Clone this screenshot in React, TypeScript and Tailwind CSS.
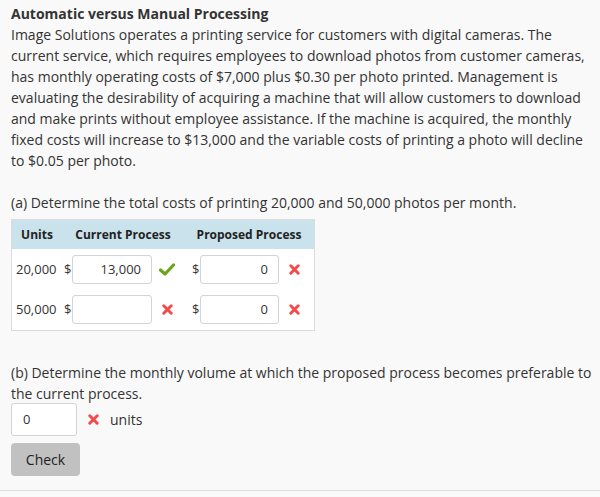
import React from 'react';

const font = { fontFamily: '"Open Sans", "Liberation Sans", sans-serif' };

const CheckIcon = () => (
  <svg width="16" height="13" viewBox="0 0 16 13" className="shrink-0">
    <path d="M1.5 7 L6 11 L14.5 2" fill="none" stroke="#6aa51c" strokeWidth="3.2" strokeLinecap="round" strokeLinejoin="round" />
  </svg>
);

const CrossIcon = () => (
  <svg width="11" height="11" viewBox="0 0 11 11" className="shrink-0">
    <path d="M1.8 1.8 L9.2 9.2 M9.2 1.8 L1.8 9.2" fill="none" stroke="#f24b4b" strokeWidth="3" strokeLinecap="round" />
  </svg>
);

const Field = ({ value, className = '' }: { value: string; className?: string }) => (
  <div
    className={`h-[29px] bg-white border border-[#d4d4d4] rounded-[3px] flex items-center justify-end pr-[10px] text-[13px] text-[#333] ${className}`}
  >
    {value}
  </div>
);

type Row = { units: string; current: string; currentOk: boolean; proposed: string; proposedOk: boolean };

const rows: Row[] = [
  { units: '20,000', current: '13,000', currentOk: true, proposed: '0', proposedOk: false },
  { units: '50,000', current: '', currentOk: false, proposed: '0', proposedOk: false },
];

export default function App() {
  return (
    <div style={font} className="w-[600px] h-[497px] bg-[#f9f9f9] text-[#333] overflow-hidden">
      <div className="border-b border-[#dcdcdc] h-[491px] pl-[11px] pr-[6px] pt-[3px]">
        <h1 className="text-[14px] leading-[21px] font-bold">Automatic versus Manual Processing</h1>
        <p className="text-[14px] leading-[21px]">
          Image Solutions operates a printing service for customers with digital cameras. The current service, which
          requires employees to download photos from customer cameras, has monthly operating costs of $7,000 plus $0.30
          per photo printed. Management is evaluating the desirability of acquiring a machine that will allow customers to
          download and make prints without employee assistance. If the machine is acquired, the monthly fixed costs will
          increase to $13,000 and the variable costs of printing a photo will decline to $0.05 per photo.
        </p>

        <p className="text-[14px] leading-[21px] mt-[21px]">
          (a) Determine the total costs of printing 20,000 and 50,000 photos per month.
        </p>

        {/* Cost table */}
        <div className="mt-[6px] w-[304px] border border-[#dcdcdc] bg-white">
          <div className="h-[29px] bg-[#c9e2ec] flex items-center text-[12px] font-bold text-[#222]">
            <div className="w-[50px] text-center">Units</div>
            <div className="w-[122px] text-center">Current Process</div>
            <div className="flex-1 text-center">Proposed Process</div>
          </div>
          <div className="flex flex-col gap-[11px] py-[6px]">
            {rows.map((row) => (
              <div key={row.units} className="flex items-center text-[13px]">
                <div className="w-[52px] pl-[4px]">{row.units}</div>
                <div className="w-[8px]">$</div>
                <Field value={row.current} className="w-[80px]" />
                <div className="w-[30px] flex justify-center">
                  {row.currentOk ? <CheckIcon /> : <CrossIcon />}
                </div>
                <div className="w-[18px] pl-[10px]">$</div>
                <Field value={row.proposed} className="w-[79px]" />
                <div className="w-[30px] flex justify-center">
                  {row.proposedOk ? <CheckIcon /> : <CrossIcon />}
                </div>
              </div>
            ))}
          </div>
        </div>

        <p className="text-[14px] leading-[21px] mt-[31px]">
          (b) Determine the monthly volume at which the proposed process becomes preferable to the current process.
        </p>
        <div className="flex items-center -mt-[1px]">
          <div className="w-[66px] h-[33px] bg-white border border-[#d4d4d4] rounded-[3px] flex items-center pl-[11px] text-[13px]">
            0
          </div>
          <div className="w-[33px] flex justify-center">
            <CrossIcon />
          </div>
          <span className="text-[14px]">units</span>
        </div>
        <button className="mt-[7px] w-[69px] h-[33px] bg-[#c1c1c1] rounded-[4px] text-[14px] text-[#222]">
          Check
        </button>
      </div>
    </div>
  );
}
